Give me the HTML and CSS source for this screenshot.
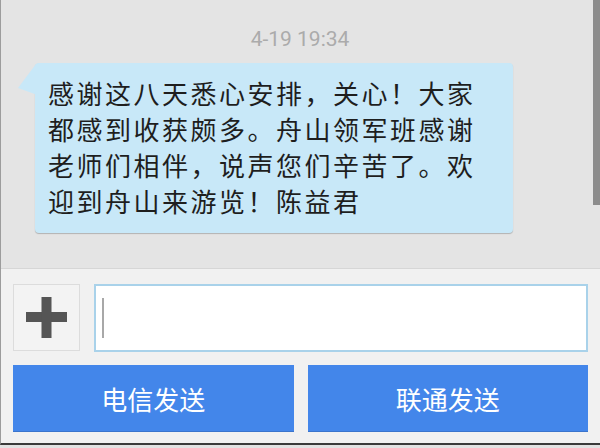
FILE: index.html
```html
<!DOCTYPE html>
<html lang="zh-CN">
<head>
<meta charset="utf-8">
<title>短信</title>
<link rel="stylesheet" href="styles.css">
</head>
<body>
<div class="screen">
  <div class="chat">
    <div class="time">4-19 19:34</div>
    <div class="msg-row">
      <div class="bubble">感谢这八天悉心安排，关心！大家都感到收获颇多。舟山领军班感谢老师们相伴，说声您们辛苦了。欢迎到舟山来游览！陈益君</div>
    </div>
    <div class="scrollbar"></div>
  </div>
  <div class="composer">
    <div class="input-row">
      <div class="plus">
        <svg width="41" height="41" viewBox="0 0 41 41"><rect x="0" y="15" width="41" height="10" fill="#555"/><rect x="15.5" y="0" width="10" height="41" fill="#555"/></svg>
      </div>
      <div class="input"><span class="caret"></span></div>
    </div>
    <div class="btn-row">
      <div class="btn">电信发送</div>
      <div class="btn">联通发送</div>
    </div>
  </div>
</div>
</body>
</html>
```
FILE: styles.css
```css
* { box-sizing: border-box; }
html, body { margin: 0; padding: 0; }
body {
  width: 600px;
  height: 448px;
  background: #e2e2e2;
  font-family: Roboto, "Noto Sans CJK SC", sans-serif;
  overflow: hidden;
}
.screen {
  width: 600px;
  height: 445px;
  display: flex;
  flex-direction: column;
  border-left: 1px solid #9c9c9c;
  border-bottom: 2px solid #3a3a3a;
}
.chat {
  position: relative;
  height: 268px;
  background: #e4e4e4;
  padding-top: 27px;
}
.time {
  text-align: center;
  font-family: Roboto, sans-serif;
  font-size: 21px;
  line-height: 24px;
  color: #ababab;
  padding-right: 1px;
}
.msg-row {
  margin-top: 12px;
  padding-left: 34px;
}
.bubble {
  position: relative;
  width: 478px;
  background: #c8e8f8;
  border-radius: 4px;
  box-shadow: 0 1px 1px rgba(0, 0, 0, 0.22);
  padding: 12px 20px 14px 13px;
  font-family: "Noto Sans CJK SC", sans-serif;
  font-size: 26px;
  line-height: 36px;
  letter-spacing: 2.5px;
  color: #1e1e1e;
}
.bubble::before {
  content: "";
  position: absolute;
  left: -17px;
  top: 1px;
  width: 18px;
  height: 32px;
  background: #c8e8f8;
  clip-path: polygon(100% 0, 0 75%, 100% 95%);
}
.scrollbar {
  position: absolute;
  right: 0;
  top: 0;
  width: 7px;
  height: 205px;
  background: #8c8c8c;
}
.composer {
  flex: 1;
  background: #f1f1f1;
  border-top: 1px solid #d6d6d6;
  padding: 15px 12px 0 12px;
}
.input-row {
  display: flex;
  gap: 14px;
}
.plus {
  width: 67px;
  height: 67px;
  flex: none;
  border: 1px solid #dcdcdc;
  background: #f3f3f3;
  display: flex;
  align-items: center;
  justify-content: center;
}
.input {
  flex: 1;
  height: 68px;
  background: #ffffff;
  border: 2px solid #a9d2ea;
  display: flex;
  align-items: center;
  padding-left: 6px;
}
.caret {
  width: 2px;
  height: 40px;
  background: #a8a8a8;
}
.btn-row {
  margin-top: 13px;
  display: grid;
  grid-template-columns: 1fr 1fr;
  gap: 14px;
}
.btn {
  height: 67px;
  background: #4386ea;
  border-bottom: 1px solid #3a74cc;
  color: #ffffff;
  font-family: "Noto Sans CJK SC", sans-serif;
  font-size: 26px;
  display: flex;
  align-items: center;
  justify-content: center;
}
```
